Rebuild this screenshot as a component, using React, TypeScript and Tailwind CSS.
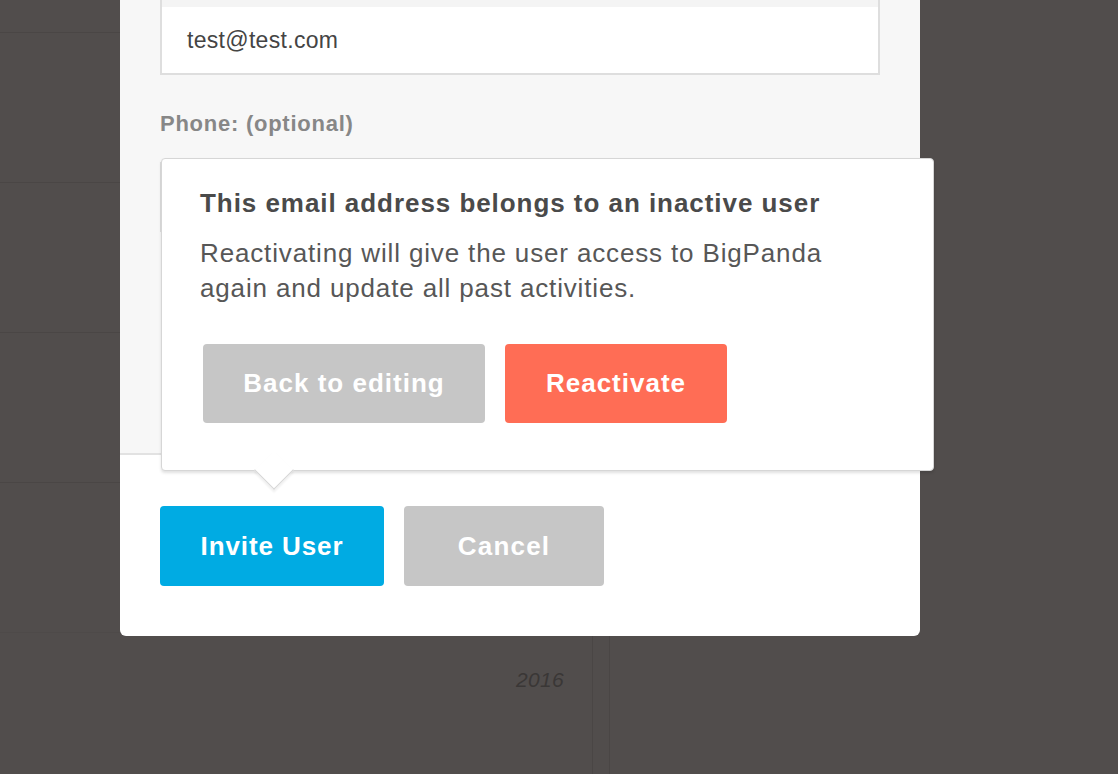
const font = {fontFamily: '"Liberation Sans", Arial, sans-serif'};

function BackgroundTable() {
    // Page behind the overlay: a dimmed table with faint row lines
    return (
        <div className="flex h-full w-full">
            <div className="flex w-[593px] flex-col border-r border-[#4a4645]">
                <div className="h-[33px] shrink-0 border-b border-[#4a4645]"></div>
                <div className="h-[150px] shrink-0 border-b border-[#4a4645]"></div>
                <div className="h-[150px] shrink-0 border-b border-[#4a4645]"></div>
                <div className="h-[150px] shrink-0 border-b border-[#4a4645]"></div>
                <div className="h-[150px] shrink-0 border-b border-[#4e4a49]"></div>
                <div className="flex h-[150px] shrink-0 justify-end pr-[28px] pt-[31px]">
                    <span className="text-[21px] italic tracking-[0.3px] text-[#3a3736]">2016</span>
                </div>
            </div>
            <div className="w-[17px] border-r border-[#4a4645]"></div>
            <div className="flex-1"></div>
        </div>
    );
}

function ReactivatePopover() {
    return (
        <div className="absolute left-[41px] top-[158px] h-[313px] w-[773px] rounded-[4px] border border-[#d6d6d6] bg-white pl-[38px] pt-[26px] shadow-[0_2px_3px_rgba(0,0,0,0.12)]">
            <h3 className="text-[26px] font-bold leading-[36px] tracking-[0.95px] text-[#4a4a4a]">
                This email address belongs to an inactive user
            </h3>
            <p className="mt-[15px] text-[26px] leading-[35px] tracking-[0.85px] text-[#575757]">
                Reactivating will give the user access to BigPanda
                <br/>
                again and update all past activities.
            </p>
            <div className="mt-[38px] flex gap-[20px] pl-[3px]">
                <button className="h-[79px] w-[282px] rounded-[4px] bg-[#c6c6c6] text-[26px] font-bold tracking-[1px] text-white">
                    Back to editing
                </button>
                <button className="h-[79px] w-[222px] rounded-[4px] bg-[#ff6d55] text-[26px] font-bold tracking-[1px] text-white">
                    Reactivate
                </button>
            </div>
            {/* pointer arrow */}
            <div className="absolute left-[98px] top-[297px] h-[28px] w-[28px] rotate-45 border-b border-r border-[#d6d6d6] bg-white shadow-[2px_2px_2px_rgba(0,0,0,0.06)]"></div>
        </div>
    );
}

export default function App() {
    return (
        <div className="relative h-[774px] w-full overflow-hidden bg-[#514d4c]" style={font}>
            <BackgroundTable/>

            {/* Invite user modal */}
            <div className="absolute left-[120px] top-[-220px] w-[800px] rounded-b-[6px] bg-white">
                <div className="h-[675px] border-b-2 border-[#e2e2e2] bg-[#f7f7f7] px-[40px] pt-[215px]">
                    <div className="flex h-[80px] items-center border-2 border-[#dedede] bg-white pl-[25px] pt-[10px] shadow-[inset_0_10px_0_#f4f4f4]">
                        <span className="text-[23px] tracking-[0.3px] text-[#444]">test@test.com</span>
                    </div>
                    <div className="mt-[32px] text-[22px] font-bold tracking-[0.75px] text-[#878787]">Phone: (optional)</div>
                    <div className="mt-[22px] h-[70px] border-2 border-[#dedede] bg-white"></div>
                </div>
                <div className="flex gap-[20px] px-[40px] pb-[50px] pt-[51px]">
                    <button className="h-[80px] w-[224px] rounded-[4px] bg-[#00abe3] text-[26px] font-bold tracking-[0.9px] text-white">
                        Invite User
                    </button>
                    <button className="h-[80px] w-[200px] rounded-[4px] bg-[#c6c6c6] text-[26px] font-bold tracking-[1.2px] text-white">
                        Cancel
                    </button>
                </div>
                <div className="absolute left-0 top-[220px]">
                    <ReactivatePopover/>
                </div>
            </div>
        </div>
    );
}
